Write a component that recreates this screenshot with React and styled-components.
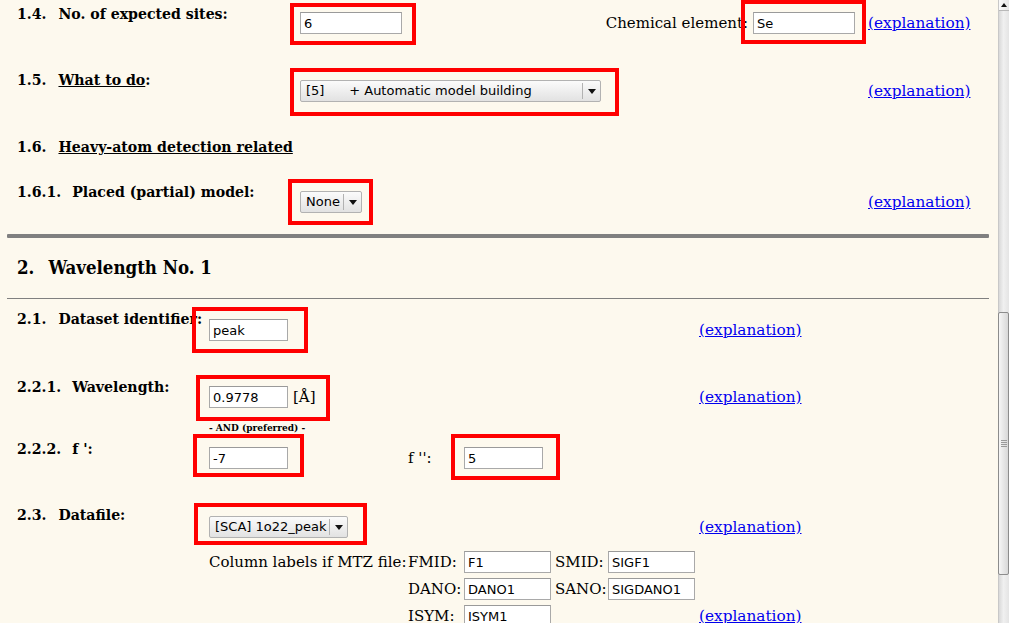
import styled, { createGlobalStyle } from 'styled-components';

const colors = {
  bg: '#fdf9ee',
  link: '#0000ee',
  rule: '#808080',
  mark: '#ff0000',
  field: '#a9a9a9',
};

const boldFace = `'DejaVu Serif Condensed', 'DejaVu Serif', serif`;

const GlobalStyle = createGlobalStyle`
  html, body {
    margin: 0;
    padding: 0;
    background: ${colors.bg};
  }
  body {
    font-family: 'DejaVu Serif', serif;
    color: #000;
    overflow: hidden;
  }
`;

const Window = styled.div`
  display: flex;
  width: 1009px;
  height: 623px;
  overflow: hidden;
  background: ${colors.bg};
`;

const Page = styled.main`
  flex: 1;
  padding: 4px 9px 0 7px;
  overflow: hidden;
`;

const Row = styled.div`
  display: grid;
  grid-template-columns: ${({ $cols }) => $cols};
  align-items: start;
  padding-left: 10px;
  margin-bottom: ${({ $gap }) => $gap}px;
`;

const Label = styled.div`
  font-family: ${boldFace};
  font-stretch: condensed;
  font-weight: bold;
  font-size: 15.7px;
  line-height: 20px;
  white-space: nowrap;
`;

const Num = styled.span`
  display: inline-block;
  margin-right: ${({ $gap }) => $gap || 12}px;
`;

const U = styled.span`
  text-decoration: underline;
`;

const Cell = styled.div`
  display: flex;
  align-items: center;
  min-height: 22px;
  margin-top: ${({ $offset }) => $offset}px;
  font-size: 15px;
  white-space: nowrap;
`;

const Explain = styled.a`
  justify-self: start;
  align-self: ${({ $end }) => ($end ? 'end' : 'start')};
  margin-top: ${({ $offset }) => $offset || 0}px;
  line-height: 22px;
  font-size: 15.3px;
  color: ${colors.link};
  text-decoration: underline;
  cursor: pointer;
`;

const Mark = styled.span`
  position: relative;
  display: inline-flex;
  align-items: center;
  gap: 5px;

  &::after {
    content: '';
    position: absolute;
    top: ${({ $box }) => -$box[0]}px;
    right: ${({ $box }) => -$box[1]}px;
    bottom: ${({ $box }) => -$box[2]}px;
    left: ${({ $box }) => -$box[3]}px;
    border: 4px solid ${colors.mark};
    pointer-events: none;
  }
`;

const Input = styled.input`
  box-sizing: border-box;
  width: ${({ $w }) => $w}px;
  height: 22px;
  margin: 0;
  padding: 0 3px;
  border: 1px solid ${colors.field};
  border-top-color: #9a9a9a;
  background: #fff;
  font: 13px 'DejaVu Sans', sans-serif;
  color: #000;
  outline: none;
`;

const Select = styled.span`
  box-sizing: border-box;
  display: inline-flex;
  width: ${({ $w }) => $w}px;
  height: 22px;
  border: 1px solid #b2b2b2;
  border-radius: 2px;
  background: linear-gradient(#fbfbfb, #e2e2e2);
  font: 13px 'DejaVu Sans', sans-serif;
`;

const SelectText = styled.span`
  flex: 1;
  padding-left: 5px;
  line-height: 20px;
  white-space: pre;
  overflow: hidden;
`;

const SelectArrow = styled.span`
  width: 17px;
  margin: 2px 0;
  border-left: 1px solid #b2b2b2;
  display: flex;
  align-items: center;
  justify-content: center;

  &::before {
    content: '';
    border-left: 4px solid transparent;
    border-right: 4px solid transparent;
    border-top: 5px solid #111;
  }
`;

const Aside = styled.span`
  display: inline-flex;
  align-items: center;
  gap: 5px;
  margin-left: auto;
  margin-right: 13px;
`;

const Heading = styled.h2`
  margin: 0 0 18px;
  padding-left: 10px;
  font-family: ${boldFace};
  font-stretch: condensed;
  font-size: 18.5px;
  line-height: 24px;
  font-weight: bold;
`;

const Rule = styled.hr`
  margin: 0 0 ${({ $gap }) => $gap}px;
  border: none;
  height: ${({ $thick }) => $thick}px;
  background: ${colors.rule};
  border-radius: ${({ $thick }) => ($thick > 1 ? 1 : 0)}px;
`;

const Note = styled.div`
  margin: 0 0 5px 202px;
  font-family: ${boldFace};
  font-stretch: condensed;
  font-size: 10px;
  line-height: 13px;
  font-weight: bold;
`;

const Pair = styled.div`
  display: grid;
  grid-template-columns: 199px 56px auto;
  align-items: center;
  font-size: 15px;
`;

const Mtz = styled.div`
  display: grid;
  grid-template-columns: 199px 56px 91px 53px 86px;
  grid-auto-rows: 22px;
  row-gap: 5px;
  align-items: center;
  font-size: 15px;
  white-space: nowrap;
`;

const Scrollbar = styled.div`
  box-sizing: border-box;
  width: 11px;
  height: 623px;
  display: flex;
  flex-direction: column;
  border-left: 1px solid #c8c8c8;
  background: linear-gradient(to right, #d9d9d9, #f0f0f0 45%, #e4e4e4);
`;

const ScrollButton = styled.div`
  height: 11px;
  flex-shrink: 0;
  display: flex;
  align-items: center;
  justify-content: center;
  background: linear-gradient(to right, #fafafa, #e6e6e6);
  border-bottom: 1px solid #b8b8b8;
  box-sizing: border-box;

  &::before {
    content: '';
    border-left: 3px solid transparent;
    border-right: 3px solid transparent;
    border-bottom: 4px solid #111;
  }
`;

const Thumb = styled.div`
  box-sizing: border-box;
  height: ${({ $h }) => $h}px;
  margin: ${({ $top }) => $top}px 0 0 -1px;
  border: 1px solid #8c8c8c;
  border-radius: 2px;
  background: linear-gradient(to right, #f6f6f6, #d8d8d8);
  display: flex;
  align-items: center;
  justify-content: center;

  &::before {
    content: '';
    width: 6px;
    height: 7px;
    background: repeating-linear-gradient(#9a9a9a 0 1px, transparent 1px 2px);
  }
`;

const topCols = '283px 568px 121px';
const lowCols = '192px 490px auto';

const App = () => {
  return (
    <Window>
      <GlobalStyle />
      <Page>
        <Row $cols={topCols} $gap={36}>
          <Label>
            <Num>1.4.</Num>No. of expected sites:
          </Label>
          <Cell $offset={8}>
            <Mark $box={[9, 14, 11, 10]}>
              <Input $w={102} defaultValue="6" />
            </Mark>
            <Aside>
              Chemical element:
              <Mark $box={[12, 11, 10, 12]}>
                <Input $w={102} defaultValue="Se" />
              </Mark>
            </Aside>
          </Cell>
          <Explain $offset={8}>(explanation)</Explain>
        </Row>

        <Row $cols={topCols} $gap={35}>
          <Label>
            <Num>1.5.</Num>
            <U>What to do</U>:
          </Label>
          <Cell $offset={10}>
            <Mark $box={[12, 18, 14, 10]}>
              <Select $w={301}>
                <SelectText>{'[5]      + Automatic model building'}</SelectText>
                <SelectArrow />
              </Select>
            </Mark>
          </Cell>
          <Explain $offset={10}>(explanation)</Explain>
        </Row>

        <Row $cols={topCols} $gap={25}>
          <Label>
            <Num>1.6.</Num>
            <U>Heavy-atom detection related</U>
          </Label>
        </Row>

        <Row $cols={topCols} $gap={21}>
          <Label>
            <Num $gap={11}>1.6.1.</Num>Placed (partial) model:
          </Label>
          <Cell $offset={9}>
            <Mark $box={[12, 11, 12, 12]}>
              <Select $w={62}>
                <SelectText>None</SelectText>
                <SelectArrow />
              </Select>
            </Mark>
          </Cell>
          <Explain $offset={9}>(explanation)</Explain>
        </Row>

        <Rule $thick={4} $gap={18} />

        <Heading>
          <Num $gap={14}>2.</Num>Wavelength No. 1
        </Heading>

        <Rule $thick={1} $gap={10} />

        <Row $cols={lowCols} $gap={36}>
          <Label>
            <Num>2.1.</Num>Dataset identifier:
          </Label>
          <Cell $offset={10}>
            <Mark $box={[12, 20, 12, 17]}>
              <Input $w={79} defaultValue="peak" />
            </Mark>
          </Cell>
          <Explain $offset={10}>(explanation)</Explain>
        </Row>

        <Row $cols={lowCols} $gap={13}>
          <Label>
            <Num $gap={11}>2.2.1.</Num>Wavelength:
          </Label>
          <Cell $offset={9}>
            <Mark $box={[11, 14, 13, 13]}>
              <Input $w={79} defaultValue="0.9778" />
              [Å]
            </Mark>
          </Cell>
          <Explain $offset={9}>(explanation)</Explain>
        </Row>

        <Note>- AND (preferred) -</Note>

        <Row $cols={lowCols} $gap={36}>
          <Label>
            <Num $gap={11}>2.2.2.</Num>f ':
          </Label>
          <Cell $offset={8}>
            <Pair>
              <span>
                <Mark $box={[13, 16, 8, 16]}>
                  <Input $w={79} defaultValue="-7" />
                </Mark>
              </span>
              <span>f '':</span>
              <span>
                <Mark $box={[13, 17, 11, 13]}>
                  <Input $w={79} defaultValue="5" />
                </Mark>
              </span>
            </Pair>
          </Cell>
        </Row>

        <Row $cols={lowCols} $gap={13}>
          <Label>
            <Num>2.3.</Num>Datafile:
          </Label>
          <Cell $offset={11}>
            <Mark $box={[13, 19, 7, 15]}>
              <Select $w={139}>
                <SelectText>[SCA] 1o22_peak</SelectText>
                <SelectArrow />
              </Select>
            </Mark>
          </Cell>
          <Explain $offset={11}>(explanation)</Explain>
        </Row>

        <Row $cols={lowCols} $gap={0}>
          <span />
          <Mtz>
            <span>Column labels if MTZ file:</span>
            <span>FMID:</span>
            <Input $w={87} defaultValue="F1" />
            <span>SMID:</span>
            <Input $w={87} defaultValue="SIGF1" />
            <span />
            <span>DANO:</span>
            <Input $w={87} defaultValue="DANO1" />
            <span>SANO:</span>
            <Input $w={87} defaultValue="SIGDANO1" />
            <span />
            <span>ISYM:</span>
            <Input $w={87} defaultValue="ISYM1" />
          </Mtz>
          <Explain $end>(explanation)</Explain>
        </Row>
      </Page>
      <Scrollbar>
        <ScrollButton />
        <Thumb $top={301} $h={263} />
      </Scrollbar>
    </Window>
  );
};

export default App;
